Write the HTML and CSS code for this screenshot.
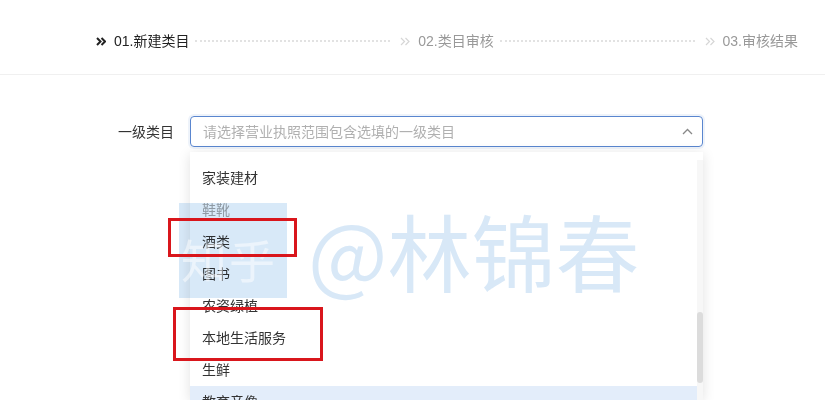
FILE: index.html
```html
<!DOCTYPE html>
<html lang="zh-CN">
<head>
<meta charset="utf-8">
<title>新建类目</title>
<link rel="stylesheet" href="styles.css">
</head>
<body>
<div class="header">
  <div class="steps">
    <div class="step active">
      <svg class="arr" width="10" height="9" viewBox="0 0 10 9"><path d="M1 1 L4.5 4.5 L1 8 M5.5 1 L9 4.5 L5.5 8" fill="none" stroke="#222" stroke-width="2"/></svg>
      <span>01.新建类目</span>
    </div>
    <div class="dots first"></div>
    <div class="step">
      <svg class="arr" width="10" height="9" viewBox="0 0 10 9"><path d="M1 1 L4.5 4.5 L1 8 M5.5 1 L9 4.5 L5.5 8" fill="none" stroke="#d6d6d6" stroke-width="1.2"/></svg>
      <span>02.类目审核</span>
    </div>
    <div class="dots"></div>
    <div class="step">
      <svg class="arr" width="10" height="9" viewBox="0 0 10 9"><path d="M1 1 L4.5 4.5 L1 8 M5.5 1 L9 4.5 L5.5 8" fill="none" stroke="#d6d6d6" stroke-width="1.2"/></svg>
      <span>03.审核结果</span>
    </div>
  </div>
</div>
<div class="form">
  <div class="row">
    <label class="label">一级类目</label>
    <div class="select-wrap">
      <div class="select">
        <span class="placeholder">请选择营业执照范围包含选填的一级类目</span>
        <svg class="chev" width="11" height="7" viewBox="0 0 11 7"><path d="M1 6 L5.5 1.5 L10 6" fill="none" stroke="#888" stroke-width="1.3"/></svg>
      </div>
      <div class="dropdown">
        <ul class="options">
          <li>家装建材</li>
          <li class="disabled">鞋靴</li>
          <li>酒类</li>
          <li>图书</li>
          <li>农资绿植</li>
          <li>本地生活服务</li>
          <li>生鲜</li>
          <li class="hover">教育音像</li>
        </ul>
        <div class="scrollbar"><div class="thumb"></div></div>
      </div>
    </div>
  </div>
</div>
<div class="wm-box"></div>
<div class="wm-zh">知乎</div>
<div class="wm-name">@林锦春</div>
<div class="mark mark1"></div>
<div class="mark mark2"></div>
</body>
</html>
```
FILE: styles.css
```css
html, body {
  margin: 0;
  padding: 0;
  background: #fff;
  overflow: hidden;
}
body {
  width: 825px;
  height: 400px;
  position: relative;
  font-family: "Liberation Sans", "Noto Sans CJK SC", sans-serif;
  font-size: 14px;
  color: #333;
}
.header {
  box-sizing: border-box;
  height: 75px;
  border-bottom: 1px solid #f0f0f0;
  padding: 8px 27px 0 96px;
  display: flex;
  align-items: center;
}
.steps {
  display: flex;
  align-items: center;
  width: 100%;
}
.step {
  display: flex;
  align-items: center;
  gap: 8px;
  color: #999;
  line-height: 20px;
  white-space: nowrap;
}
.step.active {
  color: #222;
}
.arr {
  display: block;
}
.dots {
  flex: 1;
  height: 0;
  border-top: 2px dotted #e2e2e2;
  margin: 0 10px 0 6px;
}
.form {
  padding-top: 41px;
}
.row {
  display: flex;
  align-items: center;
  padding-left: 118px;
}
.label {
  width: 56px;
  margin-right: 16px;
  line-height: 20px;
  color: #333;
}
.select-wrap {
  position: relative;
  width: 513px;
}
.select {
  box-sizing: border-box;
  height: 31px;
  border: 1px solid #5a86cf;
  border-radius: 4px;
  box-shadow: 0 0 0 2px rgba(90, 134, 207, 0.1);
  display: flex;
  align-items: center;
  justify-content: space-between;
  padding: 0 9px 0 12px;
}
.placeholder {
  color: #b0b0b0;
  line-height: 20px;
}
.chev {
  display: block;
}
.dropdown {
  position: absolute;
  top: 36px;
  left: 0;
  width: 513px;
  height: 248px;
  background: #fff;
  box-shadow: 0 2px 12px rgba(0, 0, 0, 0.12);
  overflow: hidden;
}
.options {
  list-style: none;
  margin: 0;
  padding: 10px 6px 0 0;
}
.options li {
  height: 32px;
  line-height: 32px;
  padding-left: 12px;
  color: #333;
}
.options li.disabled {
  color: #a9a9a9;
}
.options li.hover {
  background: #e3edfa;
}
.scrollbar {
  position: absolute;
  right: 0;
  top: 8px;
  width: 6px;
  bottom: 0;
  background: #f7f7f7;
}
.thumb {
  position: absolute;
  left: 0;
  top: 152px;
  width: 6px;
  height: 71px;
  border-radius: 3px;
  background: #dcdcdc;
}
.wm-box {
  position: absolute;
  left: 179px;
  top: 203px;
  width: 108px;
  height: 95px;
  background: #d8e9f8;
  mix-blend-mode: multiply;
}
.wm-zh {
  position: absolute;
  left: 181px;
  top: 232px;
  font-family: "Noto Sans CJK SC", sans-serif;
  font-size: 46px;
  line-height: 52px;
  color: rgba(255, 255, 255, 0.5);
  letter-spacing: 2px;
}
.wm-name {
  position: absolute;
  left: 308px;
  top: 208px;
  font-family: "Noto Sans CJK SC", sans-serif;
  font-size: 84px;
  line-height: 84px;
  color: #d8e8f7;
  white-space: nowrap;
}
.mark {
  position: absolute;
  border: 3px solid #d9161c;
}
.mark1 {
  left: 168px;
  top: 218px;
  width: 123px;
  height: 33px;
}
.mark2 {
  left: 173px;
  top: 307px;
  width: 144px;
  height: 48px;
}
```
